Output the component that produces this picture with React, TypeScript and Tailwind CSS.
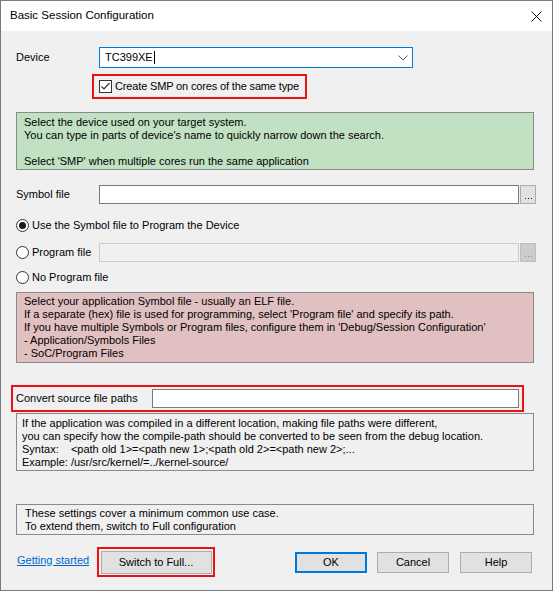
import React from "react";

const font = { fontFamily: '"Liberation Sans", Arial, sans-serif' };

const Checkbox: React.FC = () => (
  <span className="w-[13px] h-[13px] border border-[#333333] bg-white flex items-center justify-center shrink-0">
    <svg width="11" height="11" viewBox="0 0 11 11" fill="none">
      <path d="M1.5 5.5 L4 8 L9.5 2" stroke="#333333" strokeWidth="1.2" />
    </svg>
  </span>
);

const Radio: React.FC<{ checked?: boolean }> = ({ checked }) => (
  <span className="w-[13px] h-[13px] rounded-full border border-[#333333] bg-white flex items-center justify-center shrink-0">
    {checked && <span className="w-[7px] h-[7px] rounded-full bg-[#1a1a1a]" />}
  </span>
);

const Browse: React.FC<{ disabled?: boolean }> = ({ disabled }) => (
  <div
    className={
      disabled
        ? "ml-px w-[16px] h-[19px] bg-[#cccccc] border border-[#bfbfbf] flex items-end justify-center pb-[4px] gap-[2px]"
        : "ml-px w-[16px] h-[19px] bg-[#e1e1e1] border border-[#adadad] flex items-end justify-center pb-[4px] gap-[2px]"
    }
  >
    <span className={disabled ? "w-px h-px bg-[#8a8a8a]" : "w-px h-px bg-[#222222]"} />
    <span className={disabled ? "w-px h-px bg-[#8a8a8a]" : "w-px h-px bg-[#222222]"} />
    <span className={disabled ? "w-px h-px bg-[#8a8a8a]" : "w-px h-px bg-[#222222]"} />
  </div>
);

const InfoBox: React.FC<{ className: string; children: React.ReactNode }> = ({
  className,
  children,
}) => (
  <div
    className={`w-[518px] border border-[#8a8a8a] text-[11px] leading-[13px] text-black ${className}`}
  >
    {children}
  </div>
);

export default function App() {
  return (
    <div
      className="w-[553px] h-[591px] border border-[#7a7a7a] flex flex-col bg-[#f0f0f0] text-black"
      style={font}
    >
      {/* title bar */}
      <div className="h-[30px] bg-white flex items-center justify-between pl-[9px] pr-[10px] shrink-0">
        <span className="text-[11.5px]">Basic Session Configuration</span>
        <svg width="11" height="11" viewBox="0 0 11 11" fill="none">
          <path d="M0.5 0.5 L10.5 10.5 M10.5 0.5 L0.5 10.5" stroke="#111111" strokeWidth="1" />
        </svg>
      </div>

      <div className="flex-1 flex flex-col pl-[15px] text-[11px]">
        {/* device */}
        <div className="mt-[16px] flex items-center">
          <span className="w-[83px]">Device</span>
          <div className="w-[314px] h-[21px] bg-white border border-[#0078d7] flex items-center justify-between pl-[5px] pr-[4px]">
            <span className="flex items-center">
              TC399XE<span className="w-px h-[13px] bg-black ml-px" />
            </span>
            <svg width="10" height="6" viewBox="0 0 10 6" fill="none">
              <path d="M0.5 0.5 L5 5 L9.5 0.5" stroke="#5a5a5a" strokeWidth="1" />
            </svg>
          </div>
        </div>

        <div className="mt-[6px] ml-[76px] w-[215px] h-[25px] border-2 border-[#ee1111] flex items-center pl-[5px] gap-[3px]">
          <Checkbox />
          <span className="tracking-[-0.15px]">Create SMP on cores of the same type</span>
        </div>

        <InfoBox className="mt-[13px] h-[58px] bg-[#c2e0c2] px-[7px] pt-[3px]">
          <div>Select the device used on your target system.</div>
          <div>You can type in parts of device's name to quickly narrow down the search.</div>
          <div className="h-[13px]" />
          <div>Select 'SMP' when multiple cores run the same application</div>
        </InfoBox>

        {/* symbol file */}
        <div className="mt-[15px] flex items-center">
          <span className="w-[83px]">Symbol file</span>
          <div className="w-[420px] h-[19px] bg-white border border-[#7a7a7a]" />
          <Browse />
        </div>

        <div className="mt-[12px] h-[19px] flex items-center gap-[3px]">
          <Radio checked />
          <span>Use the Symbol file to Program the Device</span>
        </div>

        <div className="mt-[8px] flex items-center">
          <div className="w-[83px] flex items-center gap-[3px]">
            <Radio />
            <span>Program file</span>
          </div>
          <div className="w-[420px] h-[19px] bg-[#f0f0f0] border border-[#cccccc]" />
          <Browse disabled />
        </div>

        <div className="mt-[6px] h-[19px] flex items-center gap-[3px]">
          <Radio />
          <span>No Program file</span>
        </div>

        <InfoBox className="mt-[5px] h-[71px] bg-[#e0c0c1] px-[7px] pt-[2px]">
          <div>Select your application Symbol file - usually an ELF file.</div>
          <div>If a separate (hex) file is used for programming, select 'Program file' and specify its path.</div>
          <div>If you have multiple Symbols or Program files, configure them in 'Debug/Session Configuration'</div>
          <div>- Application/Symbols Files</div>
          <div>- SoC/Program Files</div>
        </InfoBox>

        {/* convert source paths */}
        <div className="mt-[22px] -ml-[5px] w-[513px] h-[27px] border-2 border-[#ee1111] flex items-center pl-[3px]">
          <span className="w-[136px]">Convert source file paths</span>
          <div className="w-[367px] h-[19px] bg-white border border-[#7a7a7a]" />
        </div>

        <InfoBox className="mt-px h-[58px] px-[5px] pt-[3px]">
          <div>If the application was compiled in a different location, making file paths were different,</div>
          <div>you can specify how the compile-path should be converted to be seen from the debug location.</div>
          <div>
            Syntax:&nbsp;&nbsp;&nbsp; &lt;path old 1&gt;=&lt;path new 1&gt;;&lt;path old 2&gt;=&lt;path new 2&gt;;...
          </div>
          <div>Example: /usr/src/kernel/=../kernel-source/</div>
        </InfoBox>

        <InfoBox className="mt-[33px] h-[31px] px-[8px] pt-[2px]">
          <div>These settings cover a minimum common use case.</div>
          <div>To extend them, switch to Full configuration</div>
        </InfoBox>

        {/* buttons */}
        <div className="mt-[12px] flex items-center">
          <div className="w-[81px] pl-[1px] -mt-[4px]">
            <span className="text-[#0066cc] underline">Getting started</span>
          </div>
          <div className="w-[118px] h-[30px] border-2 border-[#ee1111] flex items-center justify-center">
            <div className="w-[111px] h-[23px] bg-[#e1e1e1] border border-[#adadad] flex items-center justify-center">
              Switch to Full...
            </div>
          </div>
          <div className="ml-[80px] w-[72px] h-[21px] bg-[#e1e1e1] border-2 border-[#0078d7] flex items-center justify-center">
            OK
          </div>
          <div className="ml-[10px] w-[72px] h-[21px] bg-[#e1e1e1] border border-[#adadad] flex items-center justify-center">
            Cancel
          </div>
          <div className="ml-[11px] w-[72px] h-[21px] bg-[#e1e1e1] border border-[#adadad] flex items-center justify-center">
            Help
          </div>
        </div>
      </div>
    </div>
  );
}
